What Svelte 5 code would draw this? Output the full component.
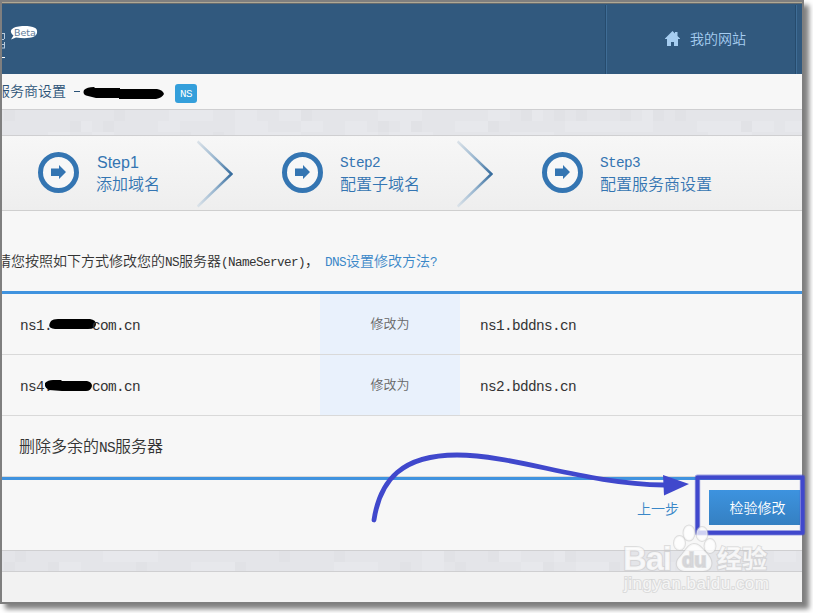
<script>
	const steps = [
		{ name: 'Step1', text: '添加域名', plain: true },
		{ name: 'Step2', text: '配置子域名' },
		{ name: 'Step3', text: '配置服务商设置' }
	];

	const servers = [
		{ from: 'ns1.', to: 'ns1.bddns.cn', mark: 'M2 2Q4 0 9 0H41Q47 1 47 5Q47 10 39 10H6Q-3 9 2 2Z', offset: -3 },
		{ from: 'ns4.', to: 'ns2.bddns.cn', mark: 'M0 3Q3 0 8 0H16L17 1H42Q47 2 47 6Q46 11 41 11H17L4 10Q-1 8 0 3Z', offset: -7 }
	];

	/**
	 * @param {number} seed
	 */
	function makeTiles(seed) {
		const tiles = [];
		let n = seed;
		for (let y = 0; y < 26; y += 11) {
			for (let x = 2; x < 802; x += 11) {
				n = (n * 1103515245 + 12345) % 2147483648;
				const r = n / 2147483648;
				if (r < 0.26) {
					tiles.push({ x, y, size: r < 0.1 ? 11 : 22, tone: r < 0.08 ? 'dark' : 'light' });
				}
			}
		}
		return tiles;
	}
	const bands = { top: makeTiles(37), bottom: makeTiles(91) };
</script>

{#snippet band(tiles)}
	<svg class="tiles" width="800" height="26">
		{#each tiles as t}
			<rect class={t.tone} x={t.x} y={t.y} width={t.size} height="11" />
		{/each}
	</svg>
{/snippet}

<div class="screen">
	<div class="window">
		<header>
			<div class="logo">
				<svg width="40" height="70">
					<path class="glyph" d="M0 30.5h2.5M2.5 30v6M0 36.5h2M0 41.5h3M2.5 39v6M0 45h3" />
					<path class="underline" d="M0 54.5h3" />
					<path class="bubble" d="M9 36.5 11.5 32.5C5 27 12 23 22 23S36 25 35 30 25 36 14 34.5Z" />
					<text x="12" y="32.5">Beta</text>
				</svg>
			</div>
			<nav>
				<svg width="15" height="15" viewBox="0 0 15 15">
					<path d="M7.5 0 10 2.5V1h2.5v4L15 7.5V8h-2v7H9v-4H6v4H2V8H0v-.5Z" />
				</svg>
				<span>我的网站</span>
			</nav>
		</header>

		<div class="title">
			<span class="name">服务商设置</span>
			<span class="dash"></span>
			<svg width="82" height="12">
				<path d="M1 3Q4 0 11 0L12 1H37V2H74Q80 3 81 7 79 11 73 12H36V11H13L5 9Q-1 8 1 3Z" />
			</svg>
			<span class="badge"><span class="half">NS</span></span>
		</div>

		<div class="band top">{@render band(bands.top)}</div>

		<div class="steps">
			{#each steps as step, i}
				<div class="step">
					<svg width="41" height="41">
						<circle cx="20.5" cy="20.5" r="18" />
						<path d="M13 16.5h8v-3.5l7 7-7 7v-3H13Z" />
					</svg>
					<div class="label">
						<span class={step.plain ? 'arial' : 'half'}>{step.name}</span>
						<span>{step.text}</span>
					</div>
				</div>
				{#if i < steps.length - 1}
					<svg class="chevron" width="36" height="68">
						<defs>
							<linearGradient id="fade{i}" x1="0" x2="1" y1="0" y2="0">
								<stop offset="0" stop-color="#dce3e9" />
								<stop offset="0.5" stop-color="#9ab7d0" />
								<stop offset="1" stop-color="#366c9d" />
							</linearGradient>
						</defs>
						<path d="M0.5 1.5 34.5 34 0.5 66.5" stroke="url(#fade{i})" />
					</svg>
				{/if}
			{/each}
		</div>

		<main>
			<p class="tip">
				请您按照如下方式修改您的<span class="half">NS</span>服务器<span class="half">(NameServer)</span>，<a href="#help"
					><span class="half">DNS</span>设置修改方法<span class="half">?</span></a
				>
			</p>

			<div class="table">
				{#each servers as s}
					<div class="row">
						<div class="from half">
							{s.from}<span class="hidden" style="--shift: {s.offset}px"
								><svg width="48" height="12"><path d={s.mark} /></svg></span
							>com.cn
						</div>
						<div class="change">修改为</div>
						<div class="to half">{s.to}</div>
					</div>
				{/each}
				<div class="row">
					<div class="note">删除多余的<span class="half">NS</span>服务器</div>
				</div>
			</div>

			<div class="actions">
				<a href="#prev">上一步</a>
				<button>检验修改</button>
			</div>
		</main>

		<div class="band bottom">{@render band(bands.bottom)}</div>
		<footer></footer>
	</div>

	<!-- hand-drawn notes and watermark over the page -->
	<svg class="overlay" width="813" height="613">
		<path class="arrow" d="M374 520C380 480 402 455 457 455C515 455 585 484 664 485" />
		<path class="head" d="M663 475 689 484 664 495.5Z" />
		<rect class="frame soft" x="697.5" y="477.3" width="105" height="55.5" />
		<rect class="frame" x="697.5" y="477.3" width="105" height="55.5" />
		<g class="watermark">
			<text class="brand" x="623" y="570" textLength="49">Bai</text>
			<ellipse cx="679.5" cy="543" rx="5.5" ry="7" />
			<ellipse cx="689" cy="533" rx="5.5" ry="7.5" />
			<ellipse cx="702" cy="534" rx="5.5" ry="7" />
			<ellipse cx="710" cy="546" rx="5.5" ry="7" />
			<path d="M694 544C700 544 703 550 708 555C714 562 712 571 703 571H686C677 571 674 563 680 557C685 552 688 544 694 544Z" />
			<text class="du" x="682" y="567">du</text>
			<text class="cn" x="717" y="568" textLength="50">经验</text>
			<text class="url" x="624" y="589" textLength="145">jingyan.baidu.com</text>
		</g>
	</svg>
</div>

<style>
	:global(body) {
		background: #fff;
		overflow: hidden;
	}
	.screen {
		position: relative;
		width: 813px;
		height: 613px;
		overflow: hidden;
		font-family: 'Noto Sans CJK SC', sans-serif;
		font-weight: 350;
		font-size: 14px;
		line-height: 20px;
	}
	.window {
		box-sizing: border-box;
		width: 804px;
		height: 604px;
		border: 2px solid #7f7f7f;
		background: #f7f7f7;
		box-shadow: 5px 5px 5px rgba(0, 0, 0, 0.5);
		overflow: hidden;
	}
	svg {
		display: block;
		flex: none;
	}
	a {
		color: #3a87c8;
		text-decoration: none;
	}
	.half {
		font-family: 'Liberation Mono', monospace;
		font-weight: 400;
		font-size: 0.9em;
		letter-spacing: -0.0445em;
	}
	header {
		box-sizing: border-box;
		display: flex;
		justify-content: space-between;
		height: 72px;
		border-top: 1px solid #b1a994;
		background: #31597e;
		box-shadow: inset 0 1px #646b70;
	}
	.logo text {
		fill: #5f7d99;
		font: 9.5px 'DejaVu Sans', sans-serif;
	}
	.bubble {
		fill: #fff;
	}
	.glyph,
	.underline {
		fill: none;
		stroke: #b8cadb;
	}
	.underline {
		stroke: #fff;
	}
	nav {
		box-sizing: border-box;
		display: flex;
		align-items: center;
		width: 192px;
		margin: 2px 5px 0 0;
		padding: 0 0 2px 59px;
		gap: 10px;
		color: #a6cdf0;
		border-left: 1px solid #264b6d;
		border-right: 1px solid #3f6d96;
		box-shadow: inset 1px 0 #3f6d96, inset -1px 0 #264b6d;
	}
	nav span {
		margin-top: -2px;
	}
	nav path {
		fill: #a6cdf0;
	}
	.title {
		display: flex;
		align-items: center;
		height: 35px;
		color: #2a5276;
	}
	.name {
		margin: -3px 0 0 -6px;
	}
	.dash {
		width: 6px;
		height: 1px;
		margin: 0 3px 0 8px;
		background: #2a5276;
	}
	.title svg {
		margin-top: 2px;
	}
	.badge {
		display: flex;
		align-items: center;
		justify-content: center;
		width: 22px;
		height: 19px;
		margin: 4px 0 0 10px;
		border-radius: 3px;
		background: #349fdb;
		color: #fff;
		font-size: 12px;
	}
	.band {
		box-sizing: border-box;
		height: 27px;
		border: solid #cfcfd1;
		border-width: 1px 0;
		background: #e4e5e9;
		overflow: hidden;
	}
	.band.bottom {
		height: 22px;
	}
	.tiles .light {
		fill: #e7e8ec;
	}
	.tiles .dark {
		fill: #e1e2e6;
	}
	.steps {
		display: flex;
		align-items: center;
		height: 74px;
		padding-left: 36px;
		border-bottom: 1px solid #cfcfcf;
		background: linear-gradient(#f7f7f7, #eee);
		color: #3475b2;
		font-size: 16px;
		line-height: 21px;
	}
	.step {
		display: flex;
		align-items: center;
		gap: 17px;
	}
	.step svg {
		margin-top: -2px;
	}
	.step circle {
		fill: #f7f7f7;
		stroke: #3475b2;
		stroke-width: 5;
	}
	.step path {
		fill: #3475b2;
	}
	.label {
		display: flex;
		flex-direction: column;
	}
	.label .half {
		margin: 1px 0 -1px;
		letter-spacing: -0.64px;
	}
	.arial {
		margin-left: 1px;
		font-family: 'Liberation Sans', sans-serif;
		font-weight: 400;
	}
	.chevron {
		margin: 2px 49px 0 37px;
	}
	.chevron path {
		fill: none;
		stroke-width: 2.6;
	}
	main {
		height: 339px;
		color: #333;
	}
	.tip {
		margin: 0 0 -3px -5px;
		padding: 39px 0 21px;
		white-space: nowrap;
	}
	.tip a {
		margin-left: 6px;
	}
	.table {
		border: solid #4093df;
		border-width: 3px 0;
		font-size: 16px;
	}
	.row {
		display: flex;
		height: 60px;
		line-height: 64px;
		border-bottom: 1px solid #d9d9d9;
	}
	.row .half {
		font-size: 14.4px;
		letter-spacing: -0.64px;
	}
	.from {
		width: 300px;
		padding-left: 18px;
	}
	.hidden {
		display: inline-block;
		width: 40px;
	}
	.hidden svg {
		display: inline;
		margin-left: var(--shift);
		margin-right: -10px;
		vertical-align: -1px;
	}
	.change {
		width: 140px;
		background: #e9f1fc;
		color: #666;
		font-size: 13px;
		line-height: 57px;
		text-align: center;
	}
	.to {
		padding-left: 20px;
	}
	.note {
		padding-left: 17px;
		line-height: 58px;
	}
	.actions {
		display: flex;
		justify-content: flex-end;
		align-items: center;
		height: 35px;
		padding: 10px 2px 0 0;
		gap: 30px;
	}
	.actions a {
		padding-top: 1px;
	}
	button {
		width: 91px;
		height: 35px;
		padding: 0 0 2px 6px;
		border: 0;
		background: linear-gradient(#3d93df, #3580c2);
		color: #fff;
		font: inherit;
	}
	footer {
		height: 30px;
		background: #f2f2f2;
	}
	.overlay {
		position: absolute;
		top: 0;
		left: 0;
	}
	.arrow {
		fill: none;
		stroke: #4048cc;
		stroke-width: 4.8;
		stroke-linecap: round;
	}
	.head {
		fill: #4048cc;
	}
	.frame {
		fill: none;
		stroke: #4048cc;
		stroke-width: 3.8;
		stroke-linejoin: round;
	}
	.frame.soft {
		stroke-width: 5.4;
		opacity: 0.5;
	}
	.watermark {
		fill: #fff;
		fill-opacity: 0.75;
		stroke: #c4c4c4;
		stroke-opacity: 0.5;
		stroke-width: 2;
		paint-order: stroke;
		font-family: 'Liberation Sans', sans-serif;
		font-weight: 700;
	}
	.brand {
		font-size: 33px;
	}
	.du {
		font-size: 20px;
		fill: #d0d1d5;
	}
	.cn {
		font-family: 'Noto Sans CJK SC', sans-serif;
		font-size: 25px;
	}
	.url {
		font-size: 17px;
		font-weight: 400;
	}
</style>
